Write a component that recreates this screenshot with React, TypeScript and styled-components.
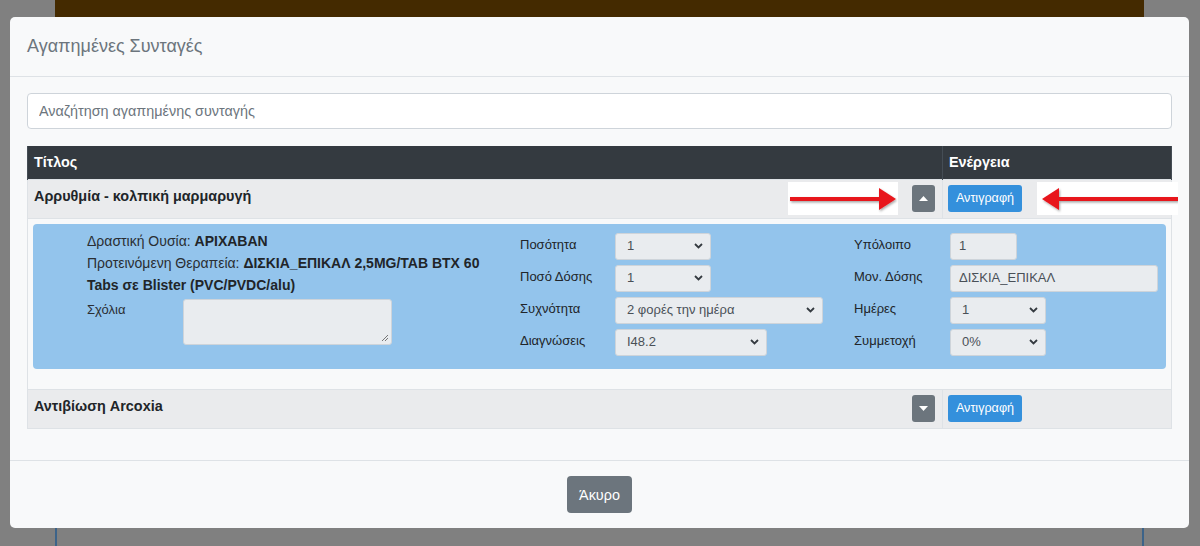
import React from "react";
import styled, { createGlobalStyle } from "styled-components";

const GlobalStyle = createGlobalStyle`
  html, body { margin: 0; padding: 0; }
  body {
    background: #808080;
    font-family: "Liberation Sans", Arial, sans-serif;
    color: #212529;
    overflow: hidden;
  }
  * { box-sizing: border-box; }
`;

const Screen = styled.div`
  position: relative;
  width: 1200px;
  height: 546px;
  overflow: hidden;
  background: #808080;
`;

const BackPage = styled.div`
  margin: 0 56px 0 55px;
  height: 546px;
  display: flex;
  flex-direction: column;
`;

const BackBar = styled.div`
  height: 44px;
  background: #442a00;
`;

const BackCard = styled.div`
  flex: 1;
  border-left: 2px solid #3c6389;
  border-right: 2px solid #3c6389;
`;

const Modal = styled.div`
  position: absolute;
  left: 10px;
  top: 17px;
  width: 1179px;
  height: 511px;
  background: #f8f9fa;
  border-radius: 5px;
  display: flex;
  flex-direction: column;
  overflow: hidden;
`;

const ModalHeader = styled.div`
  height: 60px;
  display: flex;
  align-items: center;
  padding: 0 17px;
  border-bottom: 1px solid #dee2e6;
`;

const ModalTitle = styled.h5`
  margin: 0;
  font-size: 18px;
  font-weight: 400;
  color: #6c757d;
`;

const ModalBody = styled.div`
  flex: 1;
  padding: 16px 17px;
`;

const SearchInput = styled.input`
  display: block;
  width: 100%;
  height: 36px;
  padding: 6px 11px;
  font-family: inherit;
  font-size: 14.4px;
  color: #495057;
  background: #fff;
  border: 1px solid #ced4da;
  border-radius: 4px;
  margin-bottom: 17px;
  outline: none;
  &::placeholder { color: #6c757d; }
`;

const Table = styled.table`
  width: 100%;
  border-collapse: collapse;
  font-size: 14.4px;
  line-height: 22.4px;
`;

const Th = styled.th<{ $w?: number }>`
  background: #343a40;
  color: #fff;
  text-align: left;
  font-weight: 700;
  padding: 5px 6px 5px;
  height: 33px;
  border-left: 1px solid #454d55;
  border-right: 1px solid #454d55;
  ${(p) => (p.$w ? `width: ${p.$w}px;` : "")}
`;

const Tr = styled.tr<{ $gray?: boolean }>`
  background: ${(p) => (p.$gray ? "#eaebed" : "#f8f9fa")};
`;

const Td = styled.td`
  padding: 5px 6px 6px;
  vertical-align: top;
  border: 1px solid #dee2e6;
  height: 39px;
`;

const TitleCell = styled.div`
  display: flex;
  justify-content: space-between;
  align-items: flex-start;
  font-weight: 700;
  color: #212529;
  padding-right: 1px;
`;

const CaretButton = styled.button`
  width: 23px;
  height: 27px;
  padding: 0;
  border: none;
  border-radius: 3px;
  background: #6c757d;
  display: flex;
  align-items: center;
  justify-content: center;
`;

const CopyButton = styled.button`
  height: 27px;
  width: 74px;
  padding: 0;
  border: none;
  border-radius: 3px;
  background: #3490dc;
  color: #fff;
  font-family: inherit;
  font-size: 12.6px;
  margin-left: -1px;
`;

const DetailCell = styled.td`
  padding: 5px 5px 0;
  border: 1px solid #dee2e6;
  height: 171px;
  vertical-align: top;
`;

const Panel = styled.div`
  background: #93c4ec;
  border-radius: 4px;
  height: 145px;
  padding: 9px 8px 13px 54px;
  display: grid;
  grid-template-columns: 433px 334px 1fr;
`;

const InfoColumn = styled.div`
  margin-top: -3px;
  font-size: 14px;
  line-height: 22.4px;
  color: #2a2e33;
  padding-right: 20px;
`;

const InfoLine = styled.div`
  min-height: 22px;
`;

const Strong = styled.b`
  font-weight: 700;
  color: #212529;
`;

const CommentRow = styled.div`
  display: flex;
  margin-top: 2px;
`;

const CommentLabel = styled.span`
  width: 96px;
  font-size: 13px;
  line-height: 22px;
`;

const TextArea = styled.div`
  position: relative;
  width: 209px;
  height: 46px;
  background: #e9ecef;
  border: 1px solid #ced4da;
  border-radius: 3px;
`;

const Grip = styled.svg`
  position: absolute;
  right: 2px;
  bottom: 2px;
`;

const FieldColumn = styled.div`
  display: flex;
  flex-direction: column;
  gap: 5px;
`;

const FieldRow = styled.div`
  display: flex;
  align-items: center;
  height: 27px;
`;

const FieldLabel = styled.span<{ $w: number }>`
  width: ${(p) => p.$w}px;
  font-size: 13px;
  color: #212529;
  margin-top: -2px;
`;

const Control = styled.div<{ $w: number; $pad?: number }>`
  width: ${(p) => p.$w}px;
  height: 27px;
  background: #e9ecef;
  border: 1px solid #ced4da;
  border-radius: 3px;
  display: flex;
  align-items: center;
  justify-content: space-between;
  padding: 0 7px 0 ${(p) => p.$pad ?? 11}px;
  font-size: 13px;
  color: #495057;
`;

const ModalFooter = styled.div`
  height: 68px;
  border-top: 1px solid #dee2e6;
  display: flex;
  justify-content: center;
  padding-top: 15px;
`;

const CancelButton = styled.button`
  width: 65px;
  height: 37px;
  border: none;
  border-radius: 4px;
  background: #6c757d;
  color: #fff;
  font-family: inherit;
  font-size: 14.4px;
`;

const Annotation = styled.div<{ $left: number; $w: number }>`
  position: absolute;
  top: 165px;
  left: ${(p) => p.$left}px;
  width: ${(p) => p.$w}px;
  height: 33px;
  background: #fff;
`;

const Chevron = () => (
  <svg width="9" height="6" viewBox="0 0 9 6">
    <polyline points="1,1 4.5,4.5 8,1" fill="none" stroke="#343a40" strokeWidth="1.8" />
  </svg>
);

const Caret = ({ up }: { up?: boolean }) => (
  <svg width="9" height="5" viewBox="0 0 9 5">
    <polygon points={up ? "0,5 9,5 4.5,0" : "0,0 9,0 4.5,5"} fill="#fff" />
  </svg>
);

type FieldProps = { label: string; value: string; w: number; lw: number };

const SelectField = ({ label, value, w, lw }: FieldProps) => (
  <FieldRow>
    <FieldLabel $w={lw}>{label}</FieldLabel>
    <Control $w={w}>
      <span>{value}</span>
      <Chevron />
    </Control>
  </FieldRow>
);

const InputField = ({ label, value, w, lw }: FieldProps) => (
  <FieldRow>
    <FieldLabel $w={lw}>{label}</FieldLabel>
    <Control $w={w} $pad={8}>
      <span>{value}</span>
    </Control>
  </FieldRow>
);

export default function App() {
  return (
    <Screen>
      <GlobalStyle />
      <BackPage>
        <BackBar />
        <BackCard />
      </BackPage>
      <Modal>
        <ModalHeader>
          <ModalTitle>Αγαπημένες Συνταγές</ModalTitle>
        </ModalHeader>
        <ModalBody>
          <SearchInput placeholder="Αναζήτηση αγαπημένης συνταγής" />
          <Table>
            <thead>
              <tr>
                <Th>Τίτλος</Th>
                <Th $w={229}>Ενέργεια</Th>
              </tr>
            </thead>
            <tbody>
              <Tr $gray>
                <Td>
                  <TitleCell>
                    <span>Αρρυθμία - κολπική μαρμαρυγή</span>
                    <CaretButton>
                      <Caret up />
                    </CaretButton>
                  </TitleCell>
                </Td>
                <Td>
                  <CopyButton>Αντιγραφή</CopyButton>
                </Td>
              </Tr>
              <Tr>
                <DetailCell colSpan={2}>
                  <Panel>
                    <InfoColumn>
                      <InfoLine>
                        Δραστική Ουσία: <Strong>ΑΡΙΧΑΒΑΝ</Strong>
                      </InfoLine>
                      <InfoLine>
                        Προτεινόμενη Θεραπεία:{" "}
                        <Strong>ΔΙΣΚΙΑ_ΕΠΙΚΑΛ 2,5MG/TAB BTX 60 Tabs σε Blister (PVC/PVDC/alu)</Strong>
                      </InfoLine>
                      <CommentRow>
                        <CommentLabel>Σχόλια</CommentLabel>
                        <TextArea>
                          <Grip width="8" height="8" viewBox="0 0 8 8">
                            <line x1="7" y1="1" x2="1" y2="7" stroke="#777" strokeWidth="1" />
                            <line x1="7" y1="4" x2="4" y2="7" stroke="#777" strokeWidth="1" />
                          </Grip>
                        </TextArea>
                      </CommentRow>
                    </InfoColumn>
                    <FieldColumn>
                      <SelectField label="Ποσότητα" value="1" w={96} lw={95} />
                      <SelectField label="Ποσό Δόσης" value="1" w={96} lw={95} />
                      <SelectField label="Συχνότητα" value="2 φορές την ημέρα" w={208} lw={95} />
                      <SelectField label="Διαγνώσεις" value="I48.2" w={152} lw={95} />
                    </FieldColumn>
                    <FieldColumn>
                      <InputField label="Υπόλοιπο" value="1" w={67} lw={96} />
                      <InputField label="Μον. Δόσης" value="ΔΙΣΚΙΑ_ΕΠΙΚΑΛ" w={208} lw={96} />
                      <SelectField label="Ημέρες" value="1" w={96} lw={96} />
                      <SelectField label="Συμμετοχή" value="0%" w={96} lw={96} />
                    </FieldColumn>
                  </Panel>
                </DetailCell>
              </Tr>
              <Tr $gray>
                <Td>
                  <TitleCell>
                    <span>Αντιβίωση Arcoxia</span>
                    <CaretButton>
                      <Caret />
                    </CaretButton>
                  </TitleCell>
                </Td>
                <Td>
                  <CopyButton>Αντιγραφή</CopyButton>
                </Td>
              </Tr>
            </tbody>
          </Table>
        </ModalBody>
        <ModalFooter>
          <CancelButton>Άκυρο</CancelButton>
        </ModalFooter>
        <Annotation $left={778} $w={110}>
          <svg width="110" height="33" viewBox="0 0 110 33">
            <defs>
              <filter id="sh1" x="-10%" y="-30%" width="120%" height="160%">
                <feDropShadow dx="1" dy="1.5" stdDeviation="1" floodColor="#000" floodOpacity="0.35" />
              </filter>
            </defs>
            <g filter="url(#sh1)">
              <rect x="2" y="15" width="92" height="4" fill="#e8141b" />
              <polygon points="91,6 108,17 91,28" fill="#e8141b" />
            </g>
          </svg>
        </Annotation>
        <Annotation $left={1027} $w={141}>
          <svg width="141" height="33" viewBox="0 0 141 33">
            <defs>
              <filter id="sh2" x="-10%" y="-30%" width="120%" height="160%">
                <feDropShadow dx="1" dy="1.5" stdDeviation="1" floodColor="#000" floodOpacity="0.35" />
              </filter>
            </defs>
            <g filter="url(#sh2)">
              <rect x="20" y="15" width="121" height="4" fill="#e8141b" />
              <polygon points="22,6 5,17 22,28" fill="#e8141b" />
            </g>
          </svg>
        </Annotation>
      </Modal>
    </Screen>
  );
}
